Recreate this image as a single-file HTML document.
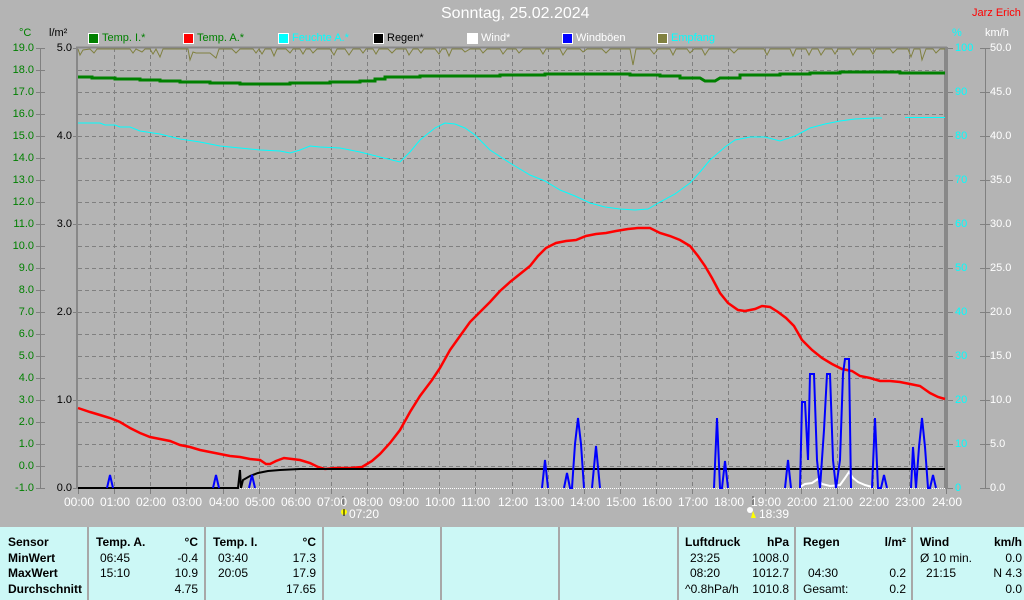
<!DOCTYPE html>
<html><head><meta charset="utf-8"><style>
*{margin:0;padding:0}
body{width:1024px;height:600px;background:#b4b4b4;position:relative;overflow:hidden;font-family:"Liberation Sans",sans-serif;font-size:12px}
.t{position:absolute;white-space:nowrap;line-height:14px}
.s{font-size:11px}
.r{text-align:right}
.g{color:#008000}.w{color:#fff}.c{color:#00ffff}.k{color:#000}
.box{position:absolute;width:9px;height:9px;border:1px solid #fff;top:33px}
#tbl{position:absolute;left:0;top:527px;width:1024px;height:73px;background:#ccf8f6}
.sep{position:absolute;top:0;width:2px;height:73px;background:#a8a8a8}
.b{font-weight:bold}
</style></head><body>
<div class="t w" style="left:441px;top:5px;font-size:16px;line-height:18px">Sonntag, 25.02.2024</div>
<div class="t s" style="left:972px;top:6px;color:#f00">Jarz Erich</div>
<div class="t g s" style="left:19px;top:26px">°C</div>
<div class="t k s" style="left:49px;top:26px">l/m²</div>
<div class="t c s" style="left:952px;top:26px">%</div>
<div class="t w s" style="left:985px;top:26px">km/h</div>

<div class="box" style="left:88px;background:#008000"></div><div class="t g s" style="left:102px;top:31px">Temp. I.*</div>
<div class="box" style="left:183px;background:#f00"></div><div class="t g s" style="left:197px;top:31px">Temp. A.*</div>
<div class="box" style="left:278px;background:#0ff"></div><div class="t c s" style="left:292px;top:31px">Feuchte A.*</div>
<div class="box" style="left:373px;background:#000"></div><div class="t k s" style="left:387px;top:31px">Regen*</div>
<div class="box" style="left:467px;background:#fff"></div><div class="t w s" style="left:481px;top:31px">Wind*</div>
<div class="box" style="left:562px;background:#00f"></div><div class="t w s" style="left:576px;top:31px">Windböen</div>
<div class="box" style="left:657px;background:#808040"></div><div class="t c s" style="left:671px;top:31px">Empfang</div>

<svg width="1024" height="600" style="position:absolute;left:0;top:0">
<g stroke="#808080" stroke-width="1" stroke-dasharray="4,3" fill="none">
<path d="M78 70.5H945M78 92.5H945M78 114.5H945M78 136.5H945M78 158.5H945M78 180.5H945M78 202.5H945M78 224.5H945M78 246.5H945M78 268.5H945M78 290.5H945M78 312.5H945M78 334.5H945M78 356.5H945M78 378.5H945M78 400.5H945M78 422.5H945M78 444.5H945M78 466.5H945"/>
<path d="M114.5 48V488M150.5 48V488M186.5 48V488M223.5 48V488M259.5 48V488M295.5 48V488M331.5 48V488M367.5 48V488M403.5 48V488M439.5 48V488M475.5 48V488M512.5 48V488M548.5 48V488M584.5 48V488M620.5 48V488M656.5 48V488M692.5 48V488M728.5 48V488M765.5 48V488M801.5 48V488M837.5 48V488M873.5 48V488M909.5 48V488"/>
</g>
<g stroke="#808080" fill="none">
<path d="M40.5 48V488M36 48.5H45M36 70.5H45M36 92.5H45M36 114.5H45M36 136.5H45M36 158.5H45M36 180.5H45M36 202.5H45M36 224.5H45M36 246.5H45M36 268.5H45M36 290.5H45M36 312.5H45M36 334.5H45M36 356.5H45M36 378.5H45M36 400.5H45M36 422.5H45M36 444.5H45M36 466.5H45M36 488.5H45"/>
<path d="M985.5 48V488M980 48.5H990M980 92.5H990M980 136.5H990M980 180.5H990M980 224.5H990M980 268.5H990M980 312.5H990M980 356.5H990M980 400.5H990M980 444.5H990M980 488.5H990"/>
<path d="M947 48.5H953M947 92.5H953M947 136.5H953M947 180.5H953M947 224.5H953M947 268.5H953M947 312.5H953M947 356.5H953M947 400.5H953M947 444.5H953M947 488.5H953"/>
<path d="M73 48.5H78M73 136.5H78M73 224.5H78M73 312.5H78M73 400.5H78M73 488.5H78"/>
<path d="M78.5 488V494M114.5 488V494M150.5 488V494M186.5 488V494M223.5 488V494M259.5 488V494M295.5 488V494M331.5 488V494M367.5 488V494M403.5 488V494M439.5 488V494M475.5 488V494M512.5 488V494M548.5 488V494M584.5 488V494M620.5 488V494M656.5 488V494M692.5 488V494M728.5 488V494M765.5 488V494M801.5 488V494M837.5 488V494M873.5 488V494M909.5 488V494M946.5 488V494"/>
</g>
<path d="M343 496V506M753 496V506" stroke="#808080" stroke-width="2"/>
<path d="M77 47V489M76 47.5H947M945 47V489M947 47V489" stroke="#888" stroke-width="2" fill="none"/>
<polyline fill="none" stroke="#808040" stroke-width="1" points="78,49 80,55 83,50 90,49 94,53 97,49 130,49 133,53 136,49 142,52 145,49 150,49 153,54 156,49 160,57 163,49 188,49 190,60 193,52 196,53 210,53 216,58 219,49 232,49 236,53 240,49 253,49 256,53 259,49 262,54 265,49 271,49 274,56 277,49 286,49 290,53 293,49 300,49 303,54 306,49 310,49 313,53 317,49 330,49 334,55 337,49 345,49 349,55 353,49 360,49 363,53 366,49 373,49 376,54 379,49 388,49 392,53 396,49 406,49 409,55 413,49 418,49 421,53 424,49 435,49 439,54 442,49 446,49 449,56 452,49 462,49 465,52 470,49 480,49 483,53 487,49 500,49 503,54 507,49 516,49 519,53 523,49 540,49 543,54 546,49 560,49 563,55 567,49 580,49 583,52 587,49 602,49 606,53 610,49 630,49 633,65 636,49 650,49 654,54 658,49 670,49 673,55 676,49 687,49 690,53 694,49 702,49 705,55 709,49 730,49 734,53 738,49 764,49 767,55 770,49 790,49 793,56 796,49 806,49 809,55 812,49 818,49 821,55 825,49 832,49 835,54 838,49 850,49 853,55 857,49 870,49 873,54 876,49 890,49 893,53 897,49 908,49 911,57 914,49 920,49 922,60 926,49 933,49 936,53 940,49 945,49"/>
<polyline fill="none" stroke="#008000" stroke-width="3" points="78,77 92,77 92,78 115,78 115,79 140,79 140,80 160,80 160,81 180,81 180,82 210,82 210,83 240,83 240,84 290,84 290,83 330,83 330,82 360,82 360,81 375,81 375,79 385,79 385,77 420,77 420,76 500,76 500,75 545,75 545,74 630,74 630,75 660,75 660,76 680,76 680,78 700,78 705,81 715,81 720,78 740,78 740,75 780,75 780,74 810,74 810,73 840,73 840,72 900,72 900,73 945,73"/>
<polyline fill="none" stroke="#00ffff" stroke-width="1" points="78,123 100,123 105,125 115,125 120,127 130,127 140,131 160,134 180,139 200,142 220,146 240,148 260,150 280,151 290,153 300,150 310,146 320,147 340,148 360,152 380,157 400,162 410,152 420,140 435,128 445,123 455,124 465,128 475,135 490,150 510,163 530,175 545,181 560,190 575,196 590,203 605,207 620,209 635,210 648,209 660,202 675,194 690,183 700,172 710,160 725,147 735,140 750,137 765,137 780,141 795,136 810,128 825,124 840,121 855,119 875,118 882,118"/>
<path d="M905 117.5H945" stroke="#00ffff"/>
<polyline fill="none" stroke="#f00" stroke-width="2.5" points="78,408 90,412 100,415 110,418 120,422 130,428 140,433 150,437 160,439 170,441 180,445 190,447 200,450 210,452 220,454 230,456 240,457 250,459 260,460 266,464 270,464 276,461 284,458 292,459 300,460 310,463 318,467 325,469 335,468 350,468 362,467 372,461 380,454 390,443 400,430 410,412 420,396 432,380 440,368 450,350 460,336 470,322 480,312 490,302 500,291 510,282 520,274 530,266 538,256 546,248 556,243 566,241 576,240 586,236 596,234 606,233 616,231 628,229 638,228 650,228 660,233 670,236 680,240 690,246 698,256 705,266 712,278 720,293 728,303 738,310 745,311 755,309 762,306 770,307 778,312 786,318 794,326 802,340 812,350 822,358 832,364 842,369 852,371 860,376 870,378 880,381 890,381 900,382 910,384 920,386 930,393 938,397 945,399"/>
<polyline fill="none" stroke="#000" stroke-width="2" points="78,488 238,488 240,470 241,488 243,480 250,476 258,473 268,471 280,470 300,469 945,469"/>
<path d="M240 488.5H945" stroke="#fff" stroke-dasharray="1,1"/>
<polyline fill="none" stroke="#fff" stroke-width="2" points="800,487 805,484 812,483 818,479 822,484 830,486 840,485 845,478 849,472 853,478 858,482 865,485 872,487"/>
<g fill="none" stroke="#0000ff" stroke-width="2">
<polyline points="107,488 110,475 113,488"/>
<polyline points="213,488 216,475 219,488"/>
<polyline points="249,488 252,475 255,488"/>
<polyline points="542,488 545,460 548,488"/>
<polyline points="564,488 567,473 570,488 572,488 575,444 578,418 581,444 584,488"/>
<polyline points="592,488 596,446 600,488"/>
<polyline points="714,488 717,418 720,488 722,488 725,461 728,488"/>
<polyline points="785,488 788,460 791,488"/>
<polyline points="800,488 802,402 805,402 808,460 810,374 814,374 817,460 820,488 824,430 827,374 830,374 833,460 836,488 840,460 843,374 845,359 849,359 851,488"/>
<polyline points="872,488 875,418 878,488 881,488 884,475 887,488"/>
<polyline points="911,488 913,447 916,488 919,447 922,418 925,447 928,488 930,488 933,475 936,488"/>
</g>
<circle cx="344" cy="512" r="3" fill="#ff0"/><path d="M344 509V516" stroke="#000" stroke-width="1"/>
<circle cx="750" cy="510" r="3" fill="#fff"/><path d="M753 511l-2 7h5z" fill="#ff0"/>
</svg>

<div class="t g r s" style="left:0;width:34px;top:41px">19.0</div>
<div class="t g r s" style="left:0;width:34px;top:63px">18.0</div>
<div class="t g r s" style="left:0;width:34px;top:85px">17.0</div>
<div class="t g r s" style="left:0;width:34px;top:107px">16.0</div>
<div class="t g r s" style="left:0;width:34px;top:129px">15.0</div>
<div class="t g r s" style="left:0;width:34px;top:151px">14.0</div>
<div class="t g r s" style="left:0;width:34px;top:173px">13.0</div>
<div class="t g r s" style="left:0;width:34px;top:195px">12.0</div>
<div class="t g r s" style="left:0;width:34px;top:217px">11.0</div>
<div class="t g r s" style="left:0;width:34px;top:239px">10.0</div>
<div class="t g r s" style="left:0;width:34px;top:261px">9.0</div>
<div class="t g r s" style="left:0;width:34px;top:283px">8.0</div>
<div class="t g r s" style="left:0;width:34px;top:305px">7.0</div>
<div class="t g r s" style="left:0;width:34px;top:327px">6.0</div>
<div class="t g r s" style="left:0;width:34px;top:349px">5.0</div>
<div class="t g r s" style="left:0;width:34px;top:371px">4.0</div>
<div class="t g r s" style="left:0;width:34px;top:393px">3.0</div>
<div class="t g r s" style="left:0;width:34px;top:415px">2.0</div>
<div class="t g r s" style="left:0;width:34px;top:437px">1.0</div>
<div class="t g r s" style="left:0;width:34px;top:459px">0.0</div>
<div class="t g r s" style="left:0;width:34px;top:481px">-1.0</div>
<div class="t k r s" style="left:40px;width:32px;top:41px">5.0</div>
<div class="t k r s" style="left:40px;width:32px;top:129px">4.0</div>
<div class="t k r s" style="left:40px;width:32px;top:217px">3.0</div>
<div class="t k r s" style="left:40px;width:32px;top:305px">2.0</div>
<div class="t k r s" style="left:40px;width:32px;top:393px">1.0</div>
<div class="t k r s" style="left:40px;width:32px;top:481px">0.0</div>
<div class="t c s" style="left:955px;top:41px">100</div>
<div class="t c s" style="left:955px;top:85px">90</div>
<div class="t c s" style="left:955px;top:129px">80</div>
<div class="t c s" style="left:955px;top:173px">70</div>
<div class="t c s" style="left:955px;top:217px">60</div>
<div class="t c s" style="left:955px;top:261px">50</div>
<div class="t c s" style="left:955px;top:305px">40</div>
<div class="t c s" style="left:955px;top:349px">30</div>
<div class="t c s" style="left:955px;top:393px">20</div>
<div class="t c s" style="left:955px;top:437px">10</div>
<div class="t c s" style="left:955px;top:481px">0</div>
<div class="t w s" style="left:990px;top:41px">50.0</div>
<div class="t w s" style="left:990px;top:85px">45.0</div>
<div class="t w s" style="left:990px;top:129px">40.0</div>
<div class="t w s" style="left:990px;top:173px">35.0</div>
<div class="t w s" style="left:990px;top:217px">30.0</div>
<div class="t w s" style="left:990px;top:261px">25.0</div>
<div class="t w s" style="left:990px;top:305px">20.0</div>
<div class="t w s" style="left:990px;top:349px">15.0</div>
<div class="t w s" style="left:990px;top:393px">10.0</div>
<div class="t w s" style="left:990px;top:437px">5.0</div>
<div class="t w s" style="left:990px;top:481px">0.0</div>
<div class="t w" style="left:64px;top:495px">00:00</div>
<div class="t w" style="left:100px;top:495px">01:00</div>
<div class="t w" style="left:136px;top:495px">02:00</div>
<div class="t w" style="left:172px;top:495px">03:00</div>
<div class="t w" style="left:209px;top:495px">04:00</div>
<div class="t w" style="left:245px;top:495px">05:00</div>
<div class="t w" style="left:281px;top:495px">06:00</div>
<div class="t w" style="left:317px;top:495px">07:00</div>
<div class="t w" style="left:353px;top:495px">08:00</div>
<div class="t w" style="left:389px;top:495px">09:00</div>
<div class="t w" style="left:425px;top:495px">10:00</div>
<div class="t w" style="left:461px;top:495px">11:00</div>
<div class="t w" style="left:498px;top:495px">12:00</div>
<div class="t w" style="left:534px;top:495px">13:00</div>
<div class="t w" style="left:570px;top:495px">14:00</div>
<div class="t w" style="left:606px;top:495px">15:00</div>
<div class="t w" style="left:642px;top:495px">16:00</div>
<div class="t w" style="left:678px;top:495px">17:00</div>
<div class="t w" style="left:714px;top:495px">18:00</div>
<div class="t w" style="left:751px;top:495px">19:00</div>
<div class="t w" style="left:787px;top:495px">20:00</div>
<div class="t w" style="left:823px;top:495px">21:00</div>
<div class="t w" style="left:859px;top:495px">22:00</div>
<div class="t w" style="left:895px;top:495px">23:00</div>
<div class="t w" style="left:932px;top:495px">24:00</div>
<div class="t w" style="left:349px;top:507px">07:20</div>
<div class="t w" style="left:759px;top:507px">18:39</div>

<div id="tbl">
<div class="sep" style="left:87px"></div><div class="sep" style="left:204px"></div><div class="sep" style="left:322px"></div><div class="sep" style="left:440px"></div><div class="sep" style="left:558px"></div><div class="sep" style="left:677px"></div><div class="sep" style="left:794px"></div><div class="sep" style="left:911px"></div>
<div class="t b" style="left:8px;top:8px">Sensor</div>
<div class="t b" style="left:8px;top:24px">MinWert</div>
<div class="t b" style="left:8px;top:39px">MaxWert</div>
<div class="t b" style="left:8px;top:55px">Durchschnitt</div>
<div class="t b" style="left:96px;top:8px">Temp. A.</div><div class="t b r" style="left:150px;width:48px;top:8px">°C</div>
<div class="t" style="left:100px;top:24px">06:45</div><div class="t r" style="left:150px;width:48px;top:24px">-0.4</div>
<div class="t" style="left:100px;top:39px">15:10</div><div class="t r" style="left:150px;width:48px;top:39px">10.9</div>
<div class="t r" style="left:150px;width:48px;top:55px">4.75</div>
<div class="t b" style="left:213px;top:8px">Temp. I.</div><div class="t b r" style="left:268px;width:48px;top:8px">°C</div>
<div class="t" style="left:218px;top:24px">03:40</div><div class="t r" style="left:268px;width:48px;top:24px">17.3</div>
<div class="t" style="left:218px;top:39px">20:05</div><div class="t r" style="left:268px;width:48px;top:39px">17.9</div>
<div class="t r" style="left:268px;width:48px;top:55px">17.65</div>
<div class="t b" style="left:685px;top:8px">Luftdruck</div><div class="t b r" style="left:740px;width:49px;top:8px">hPa</div>
<div class="t" style="left:690px;top:24px">23:25</div><div class="t r" style="left:740px;width:49px;top:24px">1008.0</div>
<div class="t" style="left:690px;top:39px">08:20</div><div class="t r" style="left:740px;width:49px;top:39px">1012.7</div>
<div class="t" style="left:685px;top:55px">^0.8hPa/h</div><div class="t r" style="left:740px;width:49px;top:55px">1010.8</div>
<div class="t b" style="left:803px;top:8px">Regen</div><div class="t b r" style="left:860px;width:46px;top:8px">l/m²</div>
<div class="t" style="left:808px;top:39px">04:30</div><div class="t r" style="left:860px;width:46px;top:39px">0.2</div>
<div class="t" style="left:803px;top:55px">Gesamt:</div><div class="t r" style="left:860px;width:46px;top:55px">0.2</div>
<div class="t b" style="left:920px;top:8px">Wind</div><div class="t b r" style="left:970px;width:52px;top:8px">km/h</div>
<div class="t" style="left:920px;top:24px">Ø 10 min.</div><div class="t r" style="left:970px;width:52px;top:24px">0.0</div>
<div class="t" style="left:926px;top:39px">21:15</div><div class="t r" style="left:970px;width:52px;top:39px">N 4.3</div>
<div class="t r" style="left:970px;width:52px;top:55px">0.0</div>
</div>
</body></html>
